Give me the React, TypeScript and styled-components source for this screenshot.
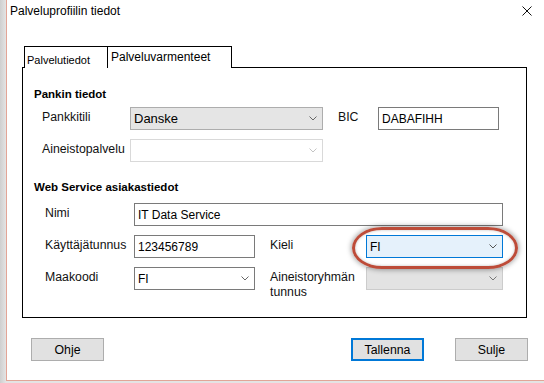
import React from "react";
import styled, { createGlobalStyle, css } from "styled-components";

const Global = createGlobalStyle`
  html, body { margin: 0; padding: 0; }
  body {
    background: #dcdcdc;
    font-family: "Liberation Sans", Arial, sans-serif;
    color: #000;
    width: 544px;
    height: 383px;
    overflow: hidden;
  }
  * { box-sizing: border-box; }
`;

const Screen = styled.div`
  width: 544px;
  height: 383px;
  display: flex;
  align-items: flex-start;
  background: linear-gradient(to right, #cfcfcf 0, #e4e4e4 6px);
`;

const Window = styled.div`
  margin-left: 6px;
  width: 538px;
  height: 381px;
  background: #fff;
  border-left: 1px solid #e2a597;
  border-bottom: 1px solid #e2a597;
  display: flex;
  flex-direction: column;
`;

const TitleBar = styled.div`
  height: 46px;
  display: flex;
  justify-content: space-between;
  align-items: flex-start;
  padding: 4px 12px 0 3px;
`;

const Title = styled.div`
  font-size: 12px;
  line-height: 14px;
`;

const CloseIcon = styled.svg`
  margin-top: 2px;
  display: block;
`;

const TabStrip = styled.div`
  display: flex;
  margin-left: 17px;
  height: 22px;
  position: relative;
  z-index: 1;
`;

const Tab = styled.div<{ $active?: boolean }>`
  height: 22px;
  border-top: 1px solid #000;
  border-left: 1px solid #000;
  background: #fff;
  ${(p) =>
    p.$active
      ? css`
          width: 83px;
          font-size: 11px;
          line-height: 13px;
          padding: 7px 0 0 2px;
        `
      : css`
          width: 125px;
          border-right: 1px solid #000;
          font-size: 12px;
          line-height: 14px;
          padding: 3px 0 0 3px;
        `}
`;

const Panel = styled.div`
  margin: -1px 0 0 15px;
  width: 505px;
  height: 251px;
  border: 1px solid #000;
  display: flex;
  flex-direction: column;
`;

const SectionTitle = styled.div<{ $top: number }>`
  margin: ${(p) => p.$top}px 0 0 11px;
  font-weight: bold;
  font-size: 11.5px;
  line-height: 14px;
`;

const Row = styled.div<{ $top: number; $indent: number }>`
  display: flex;
  align-items: flex-start;
  margin-top: ${(p) => p.$top}px;
  padding-left: ${(p) => p.$indent}px;
`;

const Label = styled.div<{ $w: number; $ml?: number }>`
  width: ${(p) => p.$w}px;
  margin-left: ${(p) => p.$ml ?? 0}px;
  font-size: 12.3px;
  line-height: 15px;
  padding-top: 3px;
  color: #111;
`;

const TextBox = styled.div<{ $w: number }>`
  width: ${(p) => p.$w}px;
  height: 23px;
  border: 1px solid #7a7a7a;
  background: #fff;
  padding-left: 3px;
  display: flex;
  align-items: center;
  font-size: 12px;
`;

type Variant = "grey" | "disabled" | "focused" | "normal" | "disabledGrey";

const comboStyles: Record<Variant, { bg: string; border: string }> = {
  grey: { bg: "#e5e5e5", border: "#adadad" },
  disabled: { bg: "#ffffff", border: "#d9d9d9" },
  focused: { bg: "#e5f1fb", border: "#0078d7" },
  normal: { bg: "#ffffff", border: "#7a7a7a" },
  disabledGrey: { bg: "#e3e3e3", border: "#cccccc" },
};

const ComboBox = styled.div<{ $w: number; $v: Variant; $fs?: number }>`
  width: ${(p) => p.$w}px;
  height: 23px;
  border: 1px solid ${(p) => comboStyles[p.$v].border};
  background: ${(p) => comboStyles[p.$v].bg};
  padding: 0 5px 0 3px;
  display: flex;
  align-items: center;
  justify-content: space-between;
  font-size: ${(p) => p.$fs ?? 12}px;
`;

const Chevron = ({ color }: { color: string }) => (
  <svg width="8" height="5" viewBox="0 0 8 5" style={{ display: "block" }}>
    <polyline points="0.5,0.5 4,4 7.5,0.5" fill="none" stroke={color} strokeWidth="1" />
  </svg>
);

const Highlight = styled.div`
  position: relative;
`;

const Ring = styled.div`
  position: absolute;
  left: -14px;
  top: -8px;
  width: 166px;
  height: 42px;
  border: 3px solid #bd4c39;
  border-radius: 30px / 21px;
  box-shadow: 0 0 5px 1px rgba(0, 0, 0, 0.35), inset 0 0 3px rgba(0, 0, 0, 0.25);
  pointer-events: none;
`;

const ButtonRow = styled.div`
  display: flex;
  margin-top: 20px;
  padding: 0 16px 0 24px;
`;

const Button = styled.div<{ $default?: boolean; $ml?: string }>`
  width: 73px;
  height: 23px;
  margin-left: ${(p) => p.$ml ?? "0"};
  background: #e1e1e1;
  border: ${(p) => (p.$default ? "2px solid #0078d7" : "1px solid #adadad")};
  display: flex;
  align-items: center;
  justify-content: center;
  font-size: 12.3px;
`;

export default function App() {
  return (
    <>
      <Global />
      <Screen>
        <Window>
          <TitleBar>
            <Title>Palveluprofiilin tiedot</Title>
            <CloseIcon width="10" height="10" viewBox="0 0 10 10">
              <path d="M0.5 0.5 L9.5 9.5 M9.5 0.5 L0.5 9.5" stroke="#111" strokeWidth="1" />
            </CloseIcon>
          </TitleBar>
          <TabStrip>
            <Tab $active>Palvelutiedot</Tab>
            <Tab>Palveluvarmenteet</Tab>
          </TabStrip>
          <Panel>
            <SectionTitle $top={19}>Pankin tiedot</SectionTitle>
            <Row $top={6} $indent={19}>
              <Label $w={88}>Pankkitili</Label>
              <ComboBox $w={193} $v="grey" $fs={13}>
                <span>Danske</span>
                <Chevron color="#666" />
              </ComboBox>
              <Label $w={40} $ml={15}>BIC</Label>
              <TextBox $w={121}>DABAFIHH</TextBox>
            </Row>
            <Row $top={9} $indent={19}>
              <Label $w={88}>Aineistopalvelu</Label>
              <ComboBox $w={193} $v="disabled">
                <span />
                <Chevron color="#c4c4c4" />
              </ComboBox>
            </Row>
            <SectionTitle $top={18}>Web Service asiakastiedot</SectionTitle>
            <Row $top={9} $indent={22}>
              <Label $w={89}>Nimi</Label>
              <TextBox $w={369}>IT Data Service</TextBox>
            </Row>
            <Row $top={9} $indent={22}>
              <Label $w={89}>Käyttäjätunnus</Label>
              <TextBox $w={121}>123456789</TextBox>
              <Label $w={96} $ml={15}>Kieli</Label>
              <Highlight>
                <ComboBox $w={137} $v="focused">
                  <span>FI</span>
                  <Chevron color="#555" />
                </ComboBox>
                <Ring />
              </Highlight>
            </Row>
            <Row $top={9} $indent={22}>
              <Label $w={89}>Maakoodi</Label>
              <ComboBox $w={121} $v="normal">
                <span>FI</span>
                <Chevron color="#666" />
              </ComboBox>
              <Label $w={96} $ml={15}>
                Aineistoryhmän
                <br />
                tunnus
              </Label>
              <ComboBox $w={137} $v="disabledGrey">
                <span />
                <Chevron color="#777" />
              </ComboBox>
            </Row>
          </Panel>
          <ButtonRow>
            <Button>Ohje</Button>
            <Button $default $ml="auto">Tallenna</Button>
            <Button $ml="31px">Sulje</Button>
          </ButtonRow>
        </Window>
      </Screen>
    </>
  );
}
